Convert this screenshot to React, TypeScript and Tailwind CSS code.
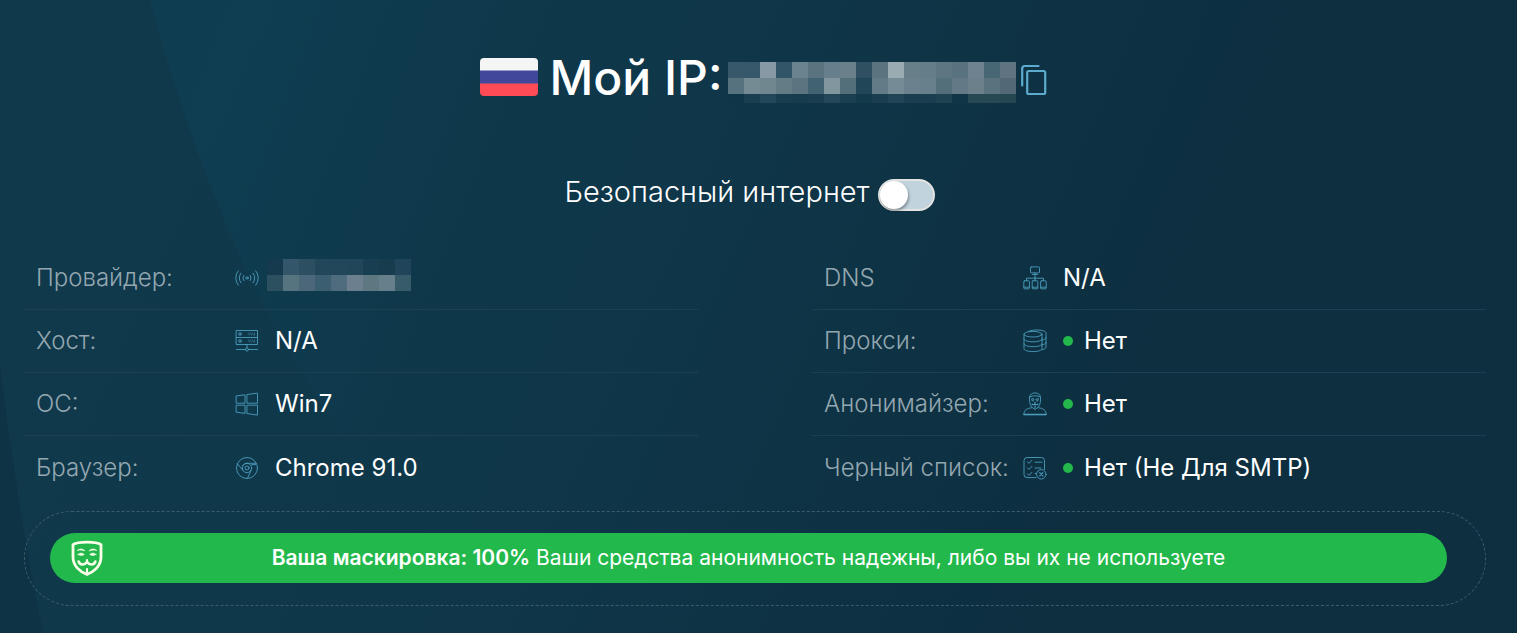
import { useState, type ReactNode } from "react";

type MosaicRow = { height: number; cells: string[] };

function Mosaic({ rows, label }: { rows: MosaicRow[]; label: string }) {
  const width = rows[0].cells.length * 16;
  const height = rows.reduce((sum, row) => sum + row.height, 0);
  let top = 0;
  return (
    <svg width={width} height={height} viewBox={`0 0 ${width} ${height}`} shapeRendering="crispEdges" className="shrink-0" role="img" aria-label={label}>
      {rows.map((row, r) => {
        const y = top;
        top += row.height;
        return row.cells.map((fill, c) => <rect key={`${r}-${c}`} x={c * 16} y={y} width={16} height={row.height} fill={fill} />);
      })}
    </svg>
  );
}

const ipMosaic: MosaicRow[] = [
  {
    height: 16,
    cells: ["#36586a", "#36586a", "#8699a4", "#335568", "#6b828f", "#5b737f", "#677f8c", "#6a818c", "#2e5061", "#5b737f", "#9aabb2", "#677f89", "#647d89", "#5d7681", "#587280", "#6e838f", "#466773", "#5f7480"],
  },
  {
    height: 16,
    cells: ["#56727e", "#748b93", "#70878f", "#637c86", "#5c7380", "#416270", "#82969f", "#526f7a", "#214658", "#637b86", "#758b96", "#6b818d", "#687f8c", "#526f7a", "#637985", "#6b808b", "#59727d", "#526876"],
  },
  {
    height: 9,
    cells: ["#0f3548", "#193e50", "#22475a", "#183d4f", "#173c4e", "#1a3e50", "#254858", "#1a3f50", "#133a4a", "#1a3e4f", "#224556", "#1a3e4e", "#1a3e4e", "#1f4251", "#103546", "#264953", "#264953", "#254752"],
  },
];

const providerMosaic: MosaicRow[] = [
  { height: 16, cells: ["#15394d", "#34566a", "#2c5062", "#22465a", "#22465a", "#224659", "#173e51", "#163c4e", "#20455a"] },
  { height: 16, cells: ["#2d5060", "#567480", "#4c677a", "#3b5f70", "#4e6c7e", "#6b7f8e", "#5d7880", "#65808a", "#385b69"] },
];

function Backdrop() {
  return (
    <svg className="absolute inset-0 -z-10 h-full w-full" viewBox="0 0 1517 633" preserveAspectRatio="none" aria-hidden="true">
      <defs>
        <linearGradient id="base" gradientUnits="userSpaceOnUse" x1="100" y1="100" x2="1250" y2="600">
          <stop offset="0" stopColor="#10394c" />
          <stop offset="0.4" stopColor="#0f374a" />
          <stop offset="0.85" stopColor="#0d2f40" />
          <stop offset="1" stopColor="#0d2f40" />
        </linearGradient>
        <linearGradient id="fan" gradientUnits="userSpaceOnUse" x1="190" y1="110" x2="460" y2="210">
          <stop offset="0" stopColor="#0d4257" stopOpacity="0.5" />
          <stop offset="1" stopColor="#0d4257" stopOpacity="0" />
        </linearGradient>
      </defs>
      <rect width="1517" height="633" fill="url(#base)" />
      <path d="M150 0C180 110 210 190 243 262C300 380 390 520 484 633H800V0Z" fill="url(#fan)" />
      <path d="M0 365Q16 500 43 633H0Z" fill="#0d3141" fillOpacity="0.75" />
    </svg>
  );
}

function LineIcon({ children }: { children: ReactNode }) {
  return (
    <svg width="24" height="24" viewBox="0 0 24 24" fill="none" stroke="#4c9dbd" strokeWidth="0.9" strokeLinecap="round" strokeLinejoin="round" className="shrink-0" aria-hidden="true">
      {children}
    </svg>
  );
}

const SignalIcon = () => (
  <LineIcon>
    <ellipse cx="12" cy="12" rx="1.4" ry="1" />
    <path d="M8.800 9.400a4.300 4.300 0 0 0 0 5.200M6 7.200a7.300 7.300 0 0 0 0 9.600M3.300 4.800a11 11 0 0 0 0 14.400M15.200 9.400a4.300 4.300 0 0 1 0 5.200M18 7.200a7.300 7.300 0 0 1 0 9.600M20.700 4.800a11 11 0 0 1 0 14.400" />
  </LineIcon>
);
const ServerIcon = () => (
  <LineIcon>
    <path d="M1.5 1.5h21v14h-21zM1.5 8.5h21M12 15.5v3.3M1.5 20.5h9M13.5 20.5h9" />
    <circle cx="12" cy="20.5" r="1.5" />
    <circle cx="5" cy="5" r="1.3" />
    <circle cx="5" cy="12" r="1.3" />
    <path d="M13.5 4l1 2M15.5 4l1 2M17.5 4l1 2M19.5 4v2M13.5 11l1 2M15.5 11l1 2M17.5 11l1 2M19.5 11v2" strokeOpacity="0.55" />
  </LineIcon>
);
const WindowsIcon = () => (
  <LineIcon>
    <path d="M1.5 3.9L10 2.8v8.4H1.5zM12.3 2.5l10.2-1.4v10.1H12.3zM1.5 13.2H10v8.2l-8.5-1.2zM12.3 13.2h10.2v9.9l-10.2-1.5z" />
  </LineIcon>
);
const ChromeIcon = () => (
  <LineIcon>
    <circle cx="12" cy="12" r="10.5" />
    <circle cx="12" cy="12" r="4.7" />
    <circle cx="12" cy="12" r="2" />
    <path d="M12 7.3h9.2M7.9 14.4L2.4 7.8M16.1 14.4l-3.6 8M12 7.3c-1.8 0-3.4.9-4.2 2.2M20.7 8.6h-4" />
  </LineIcon>
);
const NetworkIcon = () => (
  <LineIcon>
    <rect x="7.5" y="0.9" width="9" height="6" rx="0.8" />
    <path d="M9.3 8.4h5.4M12 7v6M3.5 14.5v-2.3h17v2.3M12 12v2.5" />
    <rect x="0.8" y="14.8" width="5.6" height="8" rx="0.8" />
    <rect x="9.2" y="14.8" width="5.6" height="8" rx="0.8" />
    <rect x="17.6" y="14.8" width="5.6" height="8" rx="0.8" />
    <path d="M1 21.2h5.2M9.4 21.2h5.2M17.8 21.2H23" />
  </LineIcon>
);
const DatabaseIcon = () => (
  <LineIcon>
    <ellipse cx="10" cy="5.2" rx="9" ry="2.8" />
    <path d="M1 5.2v14.5c0 1.6 4 2.9 9 2.9s9-1.3 9-2.9V5.2M1 10c0 1.6 4 2.8 9 2.8s9-1.2 9-2.8M1 14.9c0 1.6 4 2.8 9 2.8s9-1.2 9-2.8M5.5 2.4C7.5 1.5 10.5 1 14 1c5 0 9 1.3 9 2.9v14.4c0 1.1-1.5 1.9-4 2.5M23 8.6c0 1.1-1.5 2-4 2.5M23 13.5c0 1.1-1.5 2-4 2.5" />
  </LineIcon>
);
const AnonymousIcon = () => (
  <LineIcon>
    <path d="M6.500 5.200C6.800 2.600 9 .9 12 .9s5.200 1.700 5.500 4.300c.3 3.800-.3 7.300-2 9.700L12 17.600l-3.500-2.700c-1.700-2.400-2.300-5.900-2-9.700zM7 4.800c3-1.400 7-1.400 10 0" />
    <path d="M8.500 7.200c.8-.6 1.700-.5 2.400.2M13.100 7.400c.7-.7 1.600-.8 2.400-.2M9 8.700h1.400M13.600 8.700H15M9 12c1 .9 2.200.8 3 0 .8.800 2 .9 3 0M12 10v1.500M12 14v2" strokeWidth="1.100" />
    <path d="M8.500 15.800C4 16.300 1 18 .8 22.600h22.400c-.2-4.600-3.200-6.300-7.700-6.800" />
    <path d="M1 22.600h22" strokeWidth="1.500" />
  </LineIcon>
);
const BlacklistIcon = () => (
  <LineIcon>
    <path d="M13 21.600H4a3 3 0 0 1-3-3V4.500a3 3 0 0 1 3-3h14.500a3 3 0 0 1 3 3v9" />
    <path d="M4.500 5.900L6 7.400l2.800-3M4.500 11.900L6 13.400l2.800-3M4.500 17.900L6 19.400l2.800-3M12 6.200h7M12 12h6M12 17.500h1" />
    <circle cx="18.300" cy="18.300" r="4.700" />
    <path d="M16.700 16.700l3.200 3.200M19.900 16.700l-3.200 3.200" strokeWidth="1.200" />
  </LineIcon>
);

function MaskIcon() {
  return (
    <svg width="32" height="36" viewBox="0 0 32 36" fill="none" stroke="#fbfee9" strokeLinecap="round" strokeLinejoin="round" aria-hidden="true">
      <path d="M2 4.600C7 1.200 25 1.200 30 4.600V17c0 9-7 15-14 17.300C9 32 2 26 2 17z" strokeWidth="2.800" />
      <path d="M6.500 10.400C8.500 8.400 12 8.400 14 11C11.500 10 9 9.800 6.500 10.400ZM25.500 10.400C23.500 8.400 20 8.400 18 11C20.500 10 23 9.800 25.500 10.400Z" fill="#fbfee9" strokeWidth="0.600" />
      <path d="M7 14.500C8.800 12.600 11.500 12.800 13.300 14.500C11.300 15.700 9 15.700 7 14.500ZM25 14.500C23.200 12.600 20.500 12.800 18.700 14.500C20.700 15.700 23 15.700 25 14.500Z" fill="#fbfee9" strokeWidth="0.600" />
      <path d="M7.600 21.500c1.200 3.600 5.600 4.200 8.400.4c2.800 3.800 7.200 3.200 8.400-.4" strokeWidth="2.600" />
      <path d="M16 20v3M16 29v4" strokeWidth="2.200" />
    </svg>
  );
}

function FlagRu() {
  return (
    <svg width="58" height="38" viewBox="0 0 58 38" className="mb-0.5 shrink-0 rounded-[4px]" role="img" aria-label="Россия">
      <rect width="58" height="13" fill="#f5f5f5" />
      <rect y="12.500" width="58" height="13.500" fill="#41479b" />
      <rect y="25.500" width="58" height="12.500" fill="#ff4b55" />
    </svg>
  );
}

type Fact = { label: string; icon: ReactNode; value: ReactNode; flagged?: boolean; masked?: boolean };

const leftFacts: Fact[] = [
  { label: "Провайдер:", icon: <SignalIcon />, value: <Mosaic rows={providerMosaic} label="Скрыто" />, masked: true },
  { label: "Хост:", icon: <ServerIcon />, value: "N/A" },
  { label: "ОС:", icon: <WindowsIcon />, value: "Win7" },
  { label: "Браузер:", icon: <ChromeIcon />, value: "Chrome 91.0" },
];

const rightFacts: Fact[] = [
  { label: "DNS", icon: <NetworkIcon />, value: "N/A" },
  { label: "Прокси:", icon: <DatabaseIcon />, value: "Нет", flagged: true },
  { label: "Анонимайзер:", icon: <AnonymousIcon />, value: "Нет", flagged: true },
  { label: "Черный список:", icon: <BlacklistIcon />, value: "Нет (Не Для SMTP)", flagged: true },
];

function FactList({ facts }: { facts: Fact[] }) {
  return (
    <dl className="min-w-0 flex-1 divide-y divide-[#1a4052] text-[24px] leading-8">
      {facts.map((fact) => (
        <div key={fact.label} className="flex h-[63px] items-center pl-3">
          <dt className="w-[199px] shrink-0 whitespace-nowrap font-light text-[#94a7b0]">{fact.label}</dt>
          <dd className={fact.masked ? "flex items-center gap-2 text-white" : "flex items-center gap-4 whitespace-nowrap text-white"}>
            {fact.icon}
            <span className={fact.masked ? "pb-1.5" : "flex items-center gap-[11px]"}>
              {fact.flagged && <span className="size-[10px] rounded-full bg-[#22b84c]" />}
              {fact.value}
            </span>
          </dd>
        </div>
      ))}
    </dl>
  );
}

export default function App() {
  const [safe, setSafe] = useState(false);
  return (
    <main className="relative isolate min-h-screen overflow-hidden bg-[#0f374a] pt-12 pr-[31px] pb-7 pl-6 font-['Inter','Liberation_Sans',sans-serif] text-white">
      <Backdrop />
      <div className="flex items-center justify-center pl-[18px]">
        <FlagRu />
        <h1 className="ml-3 text-[48px] leading-[60px] font-medium whitespace-nowrap">Мой IP:</h1>
        <div className="ml-1.5 flex items-center gap-1 pt-2">
          <Mosaic rows={ipMosaic} label="IP-адрес скрыт" />
          <button type="button" aria-label="Скопировать IP" className="mb-1 cursor-pointer">
            <svg width="28" height="32" viewBox="0 0 28 32" fill="none" stroke="#5dabce" strokeWidth="2.200" strokeLinecap="round" strokeLinejoin="round" aria-hidden="true">
              <path d="M18.500 2H4.500a2.300 2.300 0 0 0-2.300 2.300V21.500" />
              <rect x="7.200" y="7" width="18" height="23" rx="1.600" />
            </svg>
          </button>
        </div>
      </div>

      <label className="mt-[64px] flex cursor-pointer items-center justify-center gap-2 pr-[11px] text-[29px] leading-[40px] font-light whitespace-nowrap">
        Безопасный интернет
        <input type="checkbox" checked={safe} onChange={(e) => setSafe(e.target.checked)} className="peer sr-only" />
        <span className="mt-1.5 flex h-8 w-[57px] items-center rounded-full border-2 border-[#e3e3e3] bg-[#c1d4de] peer-checked:justify-end peer-checked:bg-[#22b84c] peer-focus-visible:outline-2">
          <span className="size-[28px] rounded-full bg-white shadow-[1px_2px_3px_rgba(0,0,0,0.35)]" />
        </span>
      </label>

      <section className="mt-[35px] flex gap-[114px]">
        <FactList facts={leftFacts} />
        <FactList facts={rightFacts} />
      </section>

      <div className="mt-3 rounded-full border border-dashed border-[#3a5c6c] pt-[21px] pr-[38px] pb-[22px] pl-[25px]">
        <p className="grid min-h-[50px] grid-cols-[32px_1fr_32px] items-center rounded-full bg-[#22b84c] px-[21px] text-center text-[21px] leading-7">
          <MaskIcon />
          <span>
            <strong className="font-semibold">Ваша маскировка: 100%</strong> Ваши средства анонимность надежны, либо вы их не используете
          </span>
        </p>
      </div>
    </main>
  );
}
